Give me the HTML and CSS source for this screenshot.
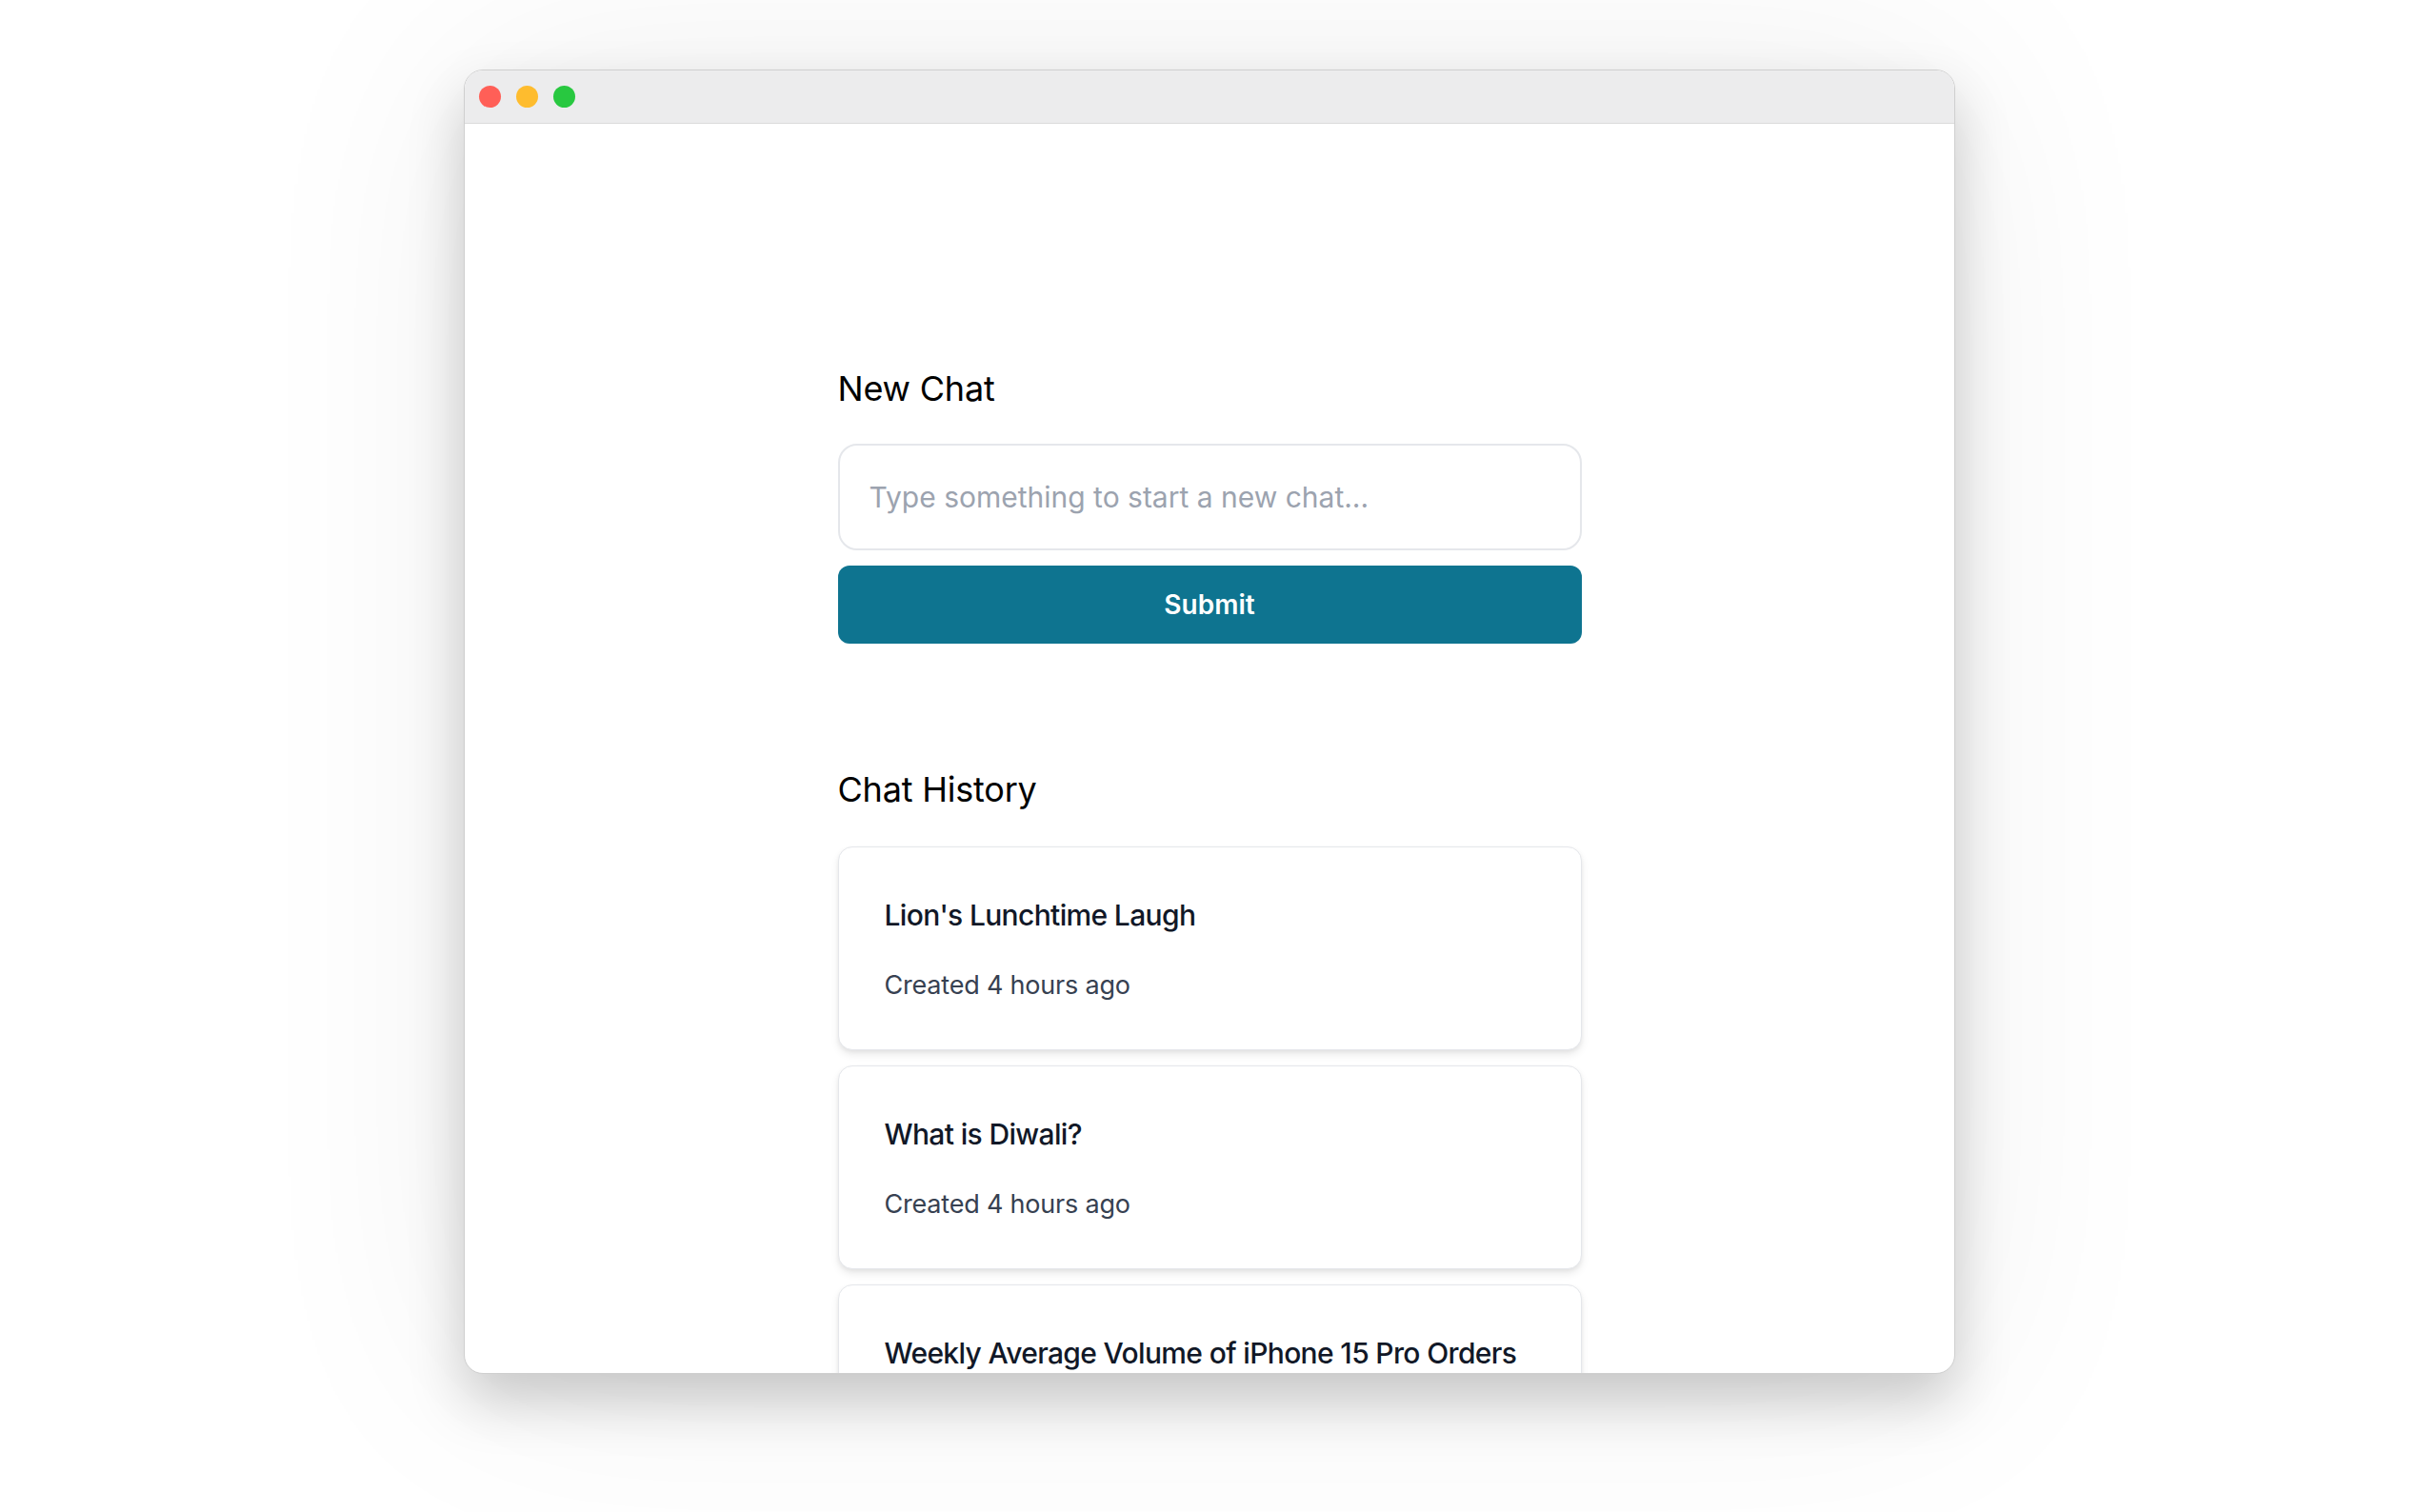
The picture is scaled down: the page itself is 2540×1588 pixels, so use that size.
FILE: index.html
```html
<!DOCTYPE html>
<html lang="en">
<head>
<meta charset="utf-8">
<title>Chat</title>
<link rel="stylesheet" href="styles.css">
</head>
<body>
<div class="window">
  <div class="titlebar">
    <span class="light red"></span>
    <span class="light yellow"></span>
    <span class="light green"></span>
  </div>
  <div class="content">
    <div class="column">
      <h2 class="heading">New Chat</h2>
      <div class="input">Type something to start a new chat...</div>
      <button class="submit">Submit</button>
      <h2 class="heading history">Chat History</h2>
      <div class="cards">
        <div class="card">
          <div class="card-title">Lion's Lunchtime Laugh</div>
          <div class="card-sub">Created 4 hours ago</div>
        </div>
        <div class="card">
          <div class="card-title">What is Diwali?</div>
          <div class="card-sub">Created 4 hours ago</div>
        </div>
        <div class="card">
          <div class="card-title">Weekly Average Volume of iPhone 15 Pro Orders</div>
          <div class="card-sub">Created 4 hours ago</div>
        </div>
      </div>
    </div>
  </div>
</div>
</body>
</html>
```

FILE: styles.css
```css
html, body {
  margin: 0;
  padding: 0;
  background: #ffffff;
}
body {
  width: 2540px;
  height: 1588px;
  overflow: hidden;
  padding-top: 73px;
  box-sizing: border-box;
  font-family: Inter, "Noto Sans", "Liberation Sans", sans-serif;
}
.window {
  width: 1566px;
  height: 1370px;
  margin: 0 auto;
  box-sizing: border-box;
  border: 1px solid #cfcfcf;
  border-radius: 20px;
  background: #ffffff;
  overflow: hidden;
  box-shadow: 0 28px 60px rgba(0, 0, 0, 0.20), 0 0 240px rgba(0, 0, 0, 0.07);
}
.titlebar {
  height: 55px;
  background: #ececed;
  border-bottom: 1px solid #dadada;
  display: flex;
  align-items: center;
  gap: 16px;
  padding-left: 15px;
}
.light {
  width: 23px;
  height: 23px;
  border-radius: 50%;
  display: block;
}
.red { background: #ff5f57; }
.yellow { background: #febc2e; }
.green { background: #28c840; }
.content {
  padding-top: 256px;
  display: flex;
  justify-content: center;
}
.column {
  width: 781px;
  display: flex;
  flex-direction: column;
}
.heading {
  margin: 0;
  font-size: 36px;
  line-height: 44px;
  font-weight: 400;
  color: #000000;
  letter-spacing: -0.2px;
}
.input {
  margin-top: 36px;
  height: 112px;
  box-sizing: border-box;
  border: 2px solid #e5e7eb;
  border-radius: 20px;
  padding-left: 31px;
  display: flex;
  align-items: center;
  font-size: 30px;
  color: #9ca3af;
  letter-spacing: 0;
}
.submit {
  margin-top: 16px;
  height: 82px;
  border: 0;
  border-radius: 12px;
  background: #0e7490;
  color: #ffffff;
  font-family: inherit;
  font-size: 28px;
  font-weight: 600;
}
.history {
  margin-top: 131px;
}
.cards {
  margin-top: 38px;
  display: flex;
  flex-direction: column;
  gap: 16px;
}
.card {
  border: 1px solid #e5e7eb;
  border-radius: 15px;
  background: #ffffff;
  box-shadow: 0 5px 8px rgba(0, 0, 0, 0.08), 0 2px 4px rgba(0, 0, 0, 0.05);
  padding: 53px 48px 47px;
  display: flex;
  flex-direction: column;
  gap: 36px;
}
.card-title {
  font-size: 30px;
  line-height: 36px;
  font-weight: 500;
  color: #111827;
  letter-spacing: -0.65px;
}
.card-sub {
  font-size: 27px;
  line-height: 40px;
  color: #374151;
  letter-spacing: -0.2px;
}
```
